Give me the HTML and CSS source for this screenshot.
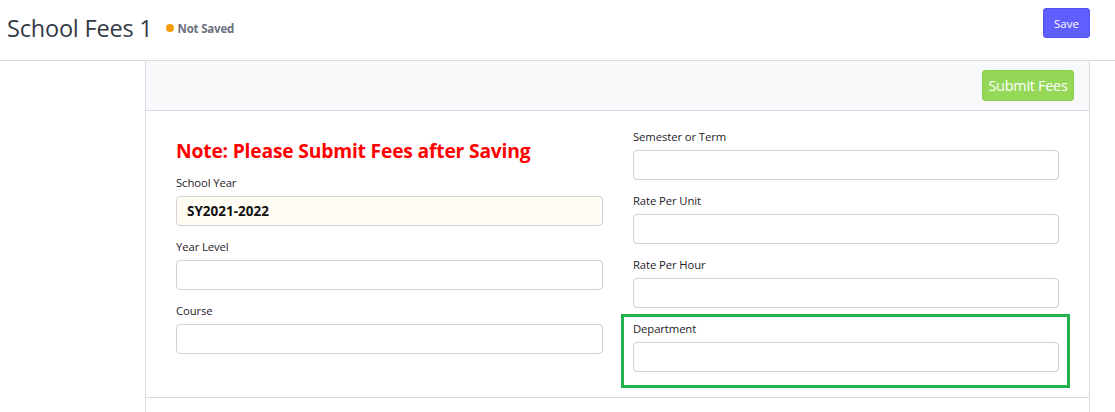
FILE: index.html
```html
<!DOCTYPE html>
<html>
<head>
<meta charset="utf-8">
<link rel="stylesheet" href="styles.css">
</head>
<body>
<header class="topbar">
  <div class="title-wrap">
    <h1 class="title">School Fees 1</h1>
    <span class="status"><span class="dot"></span>Not Saved</span>
  </div>
  <button class="btn btn-save">Save</button>
</header>
<div class="layout">
  <aside class="sidebar"></aside>
  <section class="panel">
    <div class="panel-head">
      <button class="btn btn-submit">Submit Fees</button>
    </div>
    <div class="panel-body">
      <div class="col">
        <h2 class="note">Note: Please Submit Fees after Saving</h2>
        <div class="group">
          <label class="label">School Year</label>
          <div class="input input-filled">SY2021-2022</div>
        </div>
        <div class="group">
          <label class="label">Year Level</label>
          <div class="input"></div>
        </div>
        <div class="group">
          <label class="label">Course</label>
          <div class="input"></div>
        </div>
      </div>
      <div class="col">
        <div class="group">
          <label class="label">Semester or Term</label>
          <div class="input"></div>
        </div>
        <div class="group">
          <label class="label">Rate Per Unit</label>
          <div class="input"></div>
        </div>
        <div class="group">
          <label class="label">Rate Per Hour</label>
          <div class="input"></div>
        </div>
        <div class="group group-highlight">
          <label class="label">Department</label>
          <div class="input"></div>
        </div>
      </div>
    </div>
    <div class="panel-foot"></div>
  </section>
</div>
</body>
</html>
```
FILE: styles.css
```css
* { box-sizing: border-box; }
html, body { margin: 0; padding: 0; background: #fff; }
body {
  font-family: "Open Sans", "Noto Sans", "Liberation Sans", sans-serif;
  color: #212529;
  width: 1115px;
  height: 412px;
  overflow: hidden;
}
.topbar {
  height: 61px;
  border-bottom: 1px solid #d5dbe1;
  display: flex;
  align-items: flex-start;
  justify-content: space-between;
  padding: 0 25px 0 7px;
}
.title-wrap {
  display: flex;
  align-items: center;
  height: 56px;
}
.title {
  margin: 0;
  font-size: 23.5px;
  font-weight: 400;
  color: #343a46;
  letter-spacing: -0.2px;
}
.status {
  display: flex;
  align-items: center;
  margin-left: 13px;
  font-size: 11.5px;
  font-weight: 700;
  color: #6b7280;
  letter-spacing: -0.2px;
}
.dot {
  width: 8px;
  height: 8px;
  border-radius: 50%;
  background: #f59e0b;
  margin-right: 4px;
}
.btn {
  border: 1px solid transparent;
  border-radius: 3px;
  color: #fff;
  font-family: inherit;
  cursor: pointer;
}
.btn-save {
  margin-top: 8px;
  height: 30px;
  width: 47px;
  padding: 0;
  background: #5f5fff;
  border-color: #5252f0;
  font-size: 11.5px;
}
.layout {
  display: flex;
  height: 351px;
}
.sidebar { width: 145px; flex: none; }
.panel {
  width: 945px;
  flex: none;
  border-left: 1px solid #d5dbe1;
  border-right: 1px solid #d5dbe1;
}
.panel-head {
  height: 50px;
  background: #f8f9fb;
  border-bottom: 1px solid #d5dbe1;
  display: flex;
  justify-content: flex-end;
  align-items: flex-start;
  padding: 9px 15px 0 0;
}
.btn-submit {
  height: 31px;
  width: 92px;
  padding: 0;
  background: #95d858;
  border-color: #8ccf50;
  font-size: 14.5px;
  letter-spacing: -0.3px;
}
.panel-body {
  display: grid;
  grid-template-columns: 427px 426px;
  column-gap: 30px;
  padding: 17px 29px 13px 30px;
  border-bottom: 1px solid #d5dbe1;
}
.col { display: flex; flex-direction: column; }
.note {
  margin: 10px 0 10px;
  font-size: 19.3px;
  line-height: 26px;
  font-weight: 700;
  color: #ff0000;
  letter-spacing: -0.2px;
}
.group {
  display: flex;
  flex-direction: column;
  margin-bottom: 12px;
  position: relative;
}
.label {
  font-size: 11.3px;
  line-height: 18px;
  margin-bottom: 4px;
  color: #1f2328;
  letter-spacing: -0.1px;
}
.input {
  height: 30px;
  border: 1px solid #ced4da;
  border-radius: 4px;
  background: #fff;
}
.input-filled {
  background: #fffcf4;
  font-size: 13.5px;
  font-weight: 700;
  line-height: 28px;
  padding-left: 10px;
  color: #111;
}
.group-highlight::after {
  content: "";
  position: absolute;
  top: -6px;
  left: -12px;
  right: -11px;
  bottom: -16px;
  border: 3px solid #22b14c;
  pointer-events: none;
}
```
